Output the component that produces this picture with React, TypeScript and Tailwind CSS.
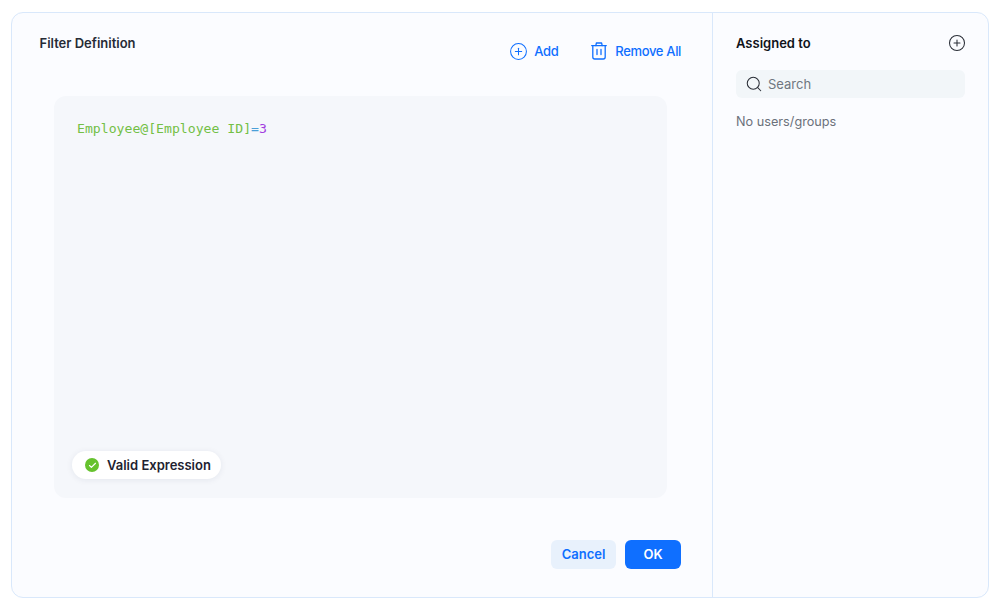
import { Check, CirclePlus, Search } from "lucide-react";

function TrashIcon() {
  return (
    <svg width="16" height="18" viewBox="0 0 16 18" fill="none" stroke="currentColor" strokeWidth="1.3" strokeLinecap="round" strokeLinejoin="round">
      <path d="M0.7 3.6H15.3" />
      <path d="M4.8 3.6L5.4 1H10.6L11.2 3.6" />
      <path d="M1.8 3.6V15a2 2 0 0 0 2 2h8.4a2 2 0 0 0 2-2V3.6" />
      <path d="M6 7.4v5.2M10 7.4v5.2" />
    </svg>
  );
}

export default function App() {
  return (
    <div className="h-[607px] w-[1000px] bg-white px-[11px] pt-[12px] pb-[9px] font-['Inter',sans-serif]">
      <div className="flex h-full overflow-hidden rounded-[12px] border border-[#d9e8fb] bg-[#fbfcff]">
        <div className="flex w-[700px] flex-col pl-[27px] pr-[31px]">
          <div className="flex h-[83px] items-start justify-between">
            <h2 className="mt-[20px] ml-[0.5px] text-[13px] leading-[20px] font-semibold text-[#262b36]">Filter Definition</h2>
            <div className="mt-[28px] flex items-center gap-[33px] text-[13px] leading-[20px] font-medium tracking-[-0.35px] text-[#0f6fff]">
              <button className="flex items-center gap-[6.5px]">
                <CirclePlus size={19} strokeWidth={1.3} />
                Add
              </button>
              <button className="flex items-center gap-[8px]">
                <TrashIcon />
                Remove All
              </button>
            </div>
          </div>
          <div className="relative ml-[15px] h-[402px] w-[612.5px] rounded-[12px] bg-[#f5f7fb] px-[23px] pt-[24px]">
            <p className="font-['DejaVu_Sans_Mono',monospace] text-[13.15px] leading-[18px] text-[#73bf45]">
              Employee@[Employee ID]<span className="text-[#4a9fd8]">=</span>
              <span className="text-[#a33ee0]">3</span>
            </p>
            <div className="absolute bottom-[19px] left-[18px] flex h-[28px] w-[149px] items-center gap-[8px] rounded-full bg-white pl-[13px] shadow-[0_1px_6px_rgba(30,40,80,0.08)]">
              <span className="flex h-[14px] w-[14px] items-center justify-center rounded-full bg-[#66c22e]">
                <Check size={9} strokeWidth={3} className="text-white" />
              </span>
              <span className="text-[13px] leading-[18px] font-semibold text-[#1e2230]">Valid Expression</span>
            </div>
          </div>
          <div className="mt-[42px] flex justify-end gap-[9px] text-[13px] font-semibold">
            <button className="h-[29px] w-[65px] rounded-[6px] bg-[#e8f1fc] text-[#0f6fff]">Cancel</button>
            <button className="h-[29px] w-[56px] rounded-[6px] bg-[#0f6fff] text-white">OK</button>
          </div>
        </div>
        <div className="flex-1 border-l border-[#d9e8fb] pl-[23px] pr-[23px]">
          <div className="mt-[20px] flex h-[20px] items-center justify-between">
            <h2 className="text-[13px] leading-[20px] font-semibold text-[#10131a]">Assigned to</h2>
            <CirclePlus size={18} strokeWidth={1.4} className="mr-[-1px] text-[#2b2f38]" />
          </div>
          <div className="mt-[17px] flex h-[28px] items-center gap-[5px] rounded-[6px] bg-[#f2f6f9] pl-[9px]">
            <Search size={18} strokeWidth={1.4} className="text-[#2b2f38]" />
            <span className="pt-[1px] text-[13px] text-[#6f7680]">Search</span>
          </div>
          <p className="mt-[14px] text-[12.7px] leading-[20px] text-[#6b717b]">No users/groups</p>
        </div>
      </div>
    </div>
  );
}
